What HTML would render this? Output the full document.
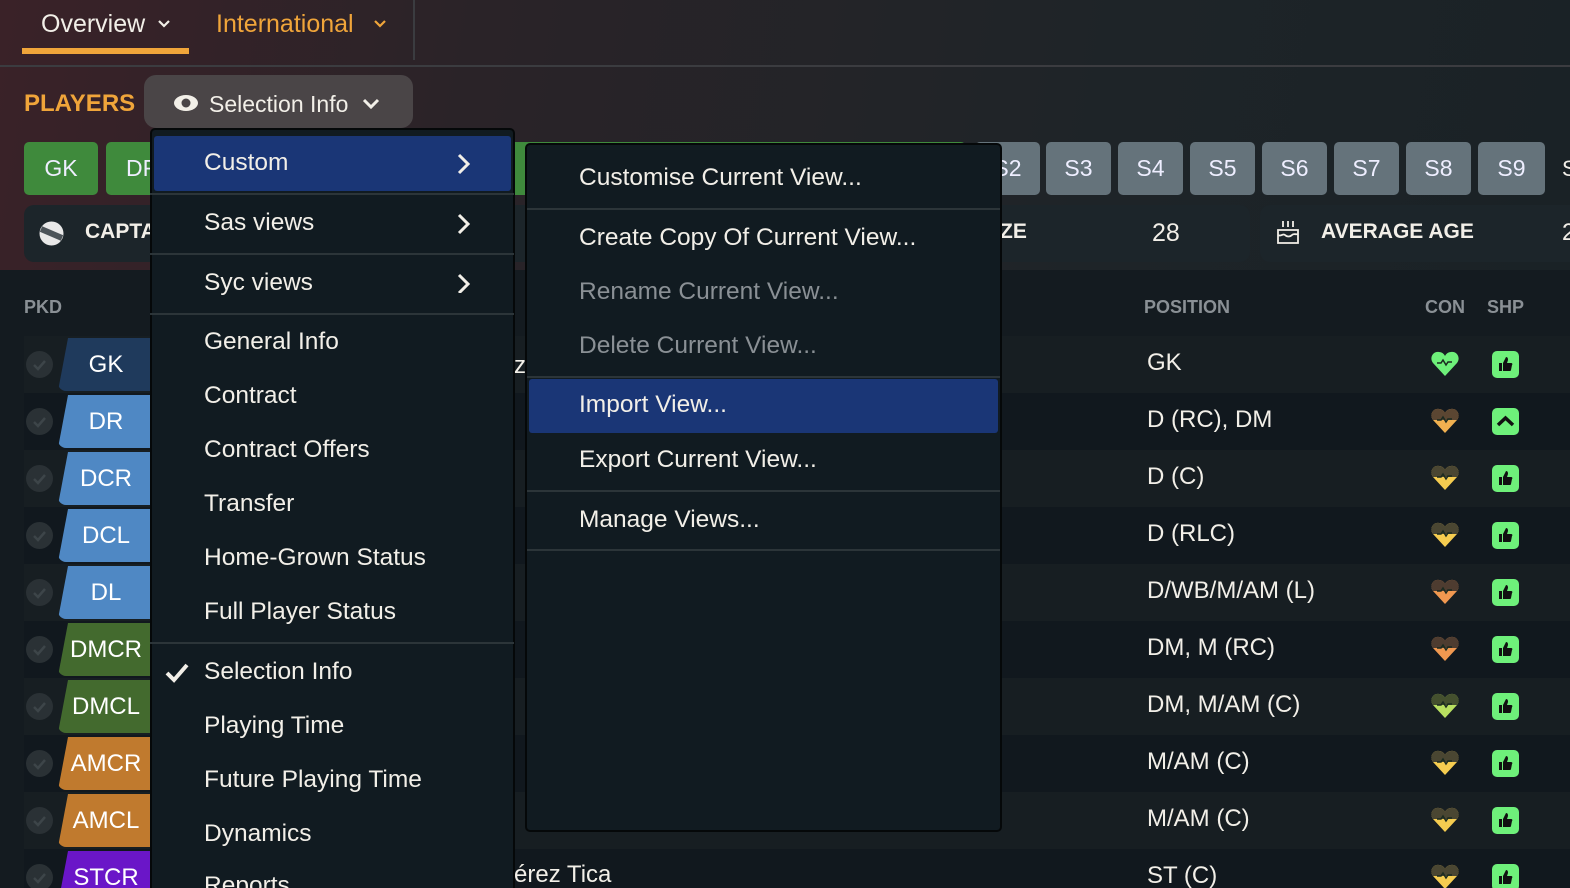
<!DOCTYPE html>
<html><head><meta charset="utf-8"><style>
*{box-sizing:border-box;margin:0;padding:0}
html,body{width:1570px;height:888px;overflow:hidden}
body{position:relative;font-family:"Liberation Sans",sans-serif;background:#141b20;color:#f2efe8}
.abs{position:absolute}
.top{left:0;top:0;width:1570px;height:270px;background:linear-gradient(100deg,#3a2228 0%,#2a2328 30%,#1e2428 70%,#1a2226 100%)}
.nav{left:0;top:0;width:1570px;height:67px;border-bottom:2px solid #3b3c40}
.t{position:absolute;white-space:nowrap}
.tab{position:absolute;top:142px;height:53px;border-radius:5px;font-size:23px;text-align:center;line-height:53px;color:#eef}
.g{background:#3f8a3c}
.s{background:#65737b;width:65px}
.row{position:absolute;left:24px;width:1546px;height:57px}
.chk{position:absolute;left:2px;top:15px;width:27px;height:27px;border-radius:50%;background:#2a3135}
.pos{position:absolute;left:34px;top:2px;width:130px;height:53px;clip-path:polygon(10px 0,100% 0,100% 100%,0 100%);border-radius:8px;font-size:24px;color:#fff;line-height:53px}
.pos span{position:absolute;left:0;width:96px;text-align:center}
.ptxt{position:absolute;left:1123px;top:13px;font-size:24px}
.menu{background:#111b21;border:2px solid #050809;border-radius:5px}
.mi{position:absolute;font-size:24.5px;color:#f2efe8;white-space:nowrap}
.sep{position:absolute;height:2px;background:#2c3539}
.dim{color:#8a9095}
</style></head><body>
<div class="abs top"></div>
<div class="abs nav"></div>
<div class="t" style="left:41px;top:10px;font-size:25px;color:#f2efe8">Overview</div>
<svg class="abs" style="left:157px;top:18px" width="14" height="12"><path d="M2 3l5 5 5-5" stroke="#f2efe8" stroke-width="2.2" fill="none"/></svg>
<div class="abs" style="left:22px;top:48px;width:167px;height:6px;background:#f0a53a"></div>
<div class="t" style="left:216px;top:10px;font-size:25px;color:#f0a53a">International</div>
<svg class="abs" style="left:373px;top:18px" width="14" height="12"><path d="M2 3l5 5 5-5" stroke="#f0a53a" stroke-width="2.2" fill="none"/></svg>
<div class="abs" style="left:413px;top:0;width:2px;height:60px;background:#3b3c40"></div>
<div class="t" style="left:24px;top:90px;font-size:24px;font-weight:bold;color:#f0a53a">PLAYERS</div>
<div class="abs" style="left:144px;top:75px;width:269px;height:53px;border-radius:12px;background:#4a4547"></div>
<svg class="abs" style="left:173px;top:94px" width="26" height="18" viewBox="0 0 26 18"><ellipse cx="13" cy="9" rx="12" ry="8" fill="#f2efe8"/><circle cx="13" cy="9" r="4.5" fill="#4a4547"/></svg>
<div class="t" style="left:209px;top:91px;font-size:23px">Selection Info</div>
<svg class="abs" style="left:361px;top:97px" width="20" height="14"><path d="M3 3l7 7 7-7" stroke="#f2efe8" stroke-width="3" fill="none"/></svg>

<div class="tab g" style="left:24px;width:74px">GK</div>
<div class="tab g" style="left:106px;width:860px;text-align:left;padding-left:20px">DR</div>
<div class="tab s" style="left:975px">S2</div>
<div class="tab s" style="left:1046px">S3</div>
<div class="tab s" style="left:1118px">S4</div>
<div class="tab s" style="left:1190px">S5</div>
<div class="tab s" style="left:1262px">S6</div>
<div class="tab s" style="left:1334px">S7</div>
<div class="tab s" style="left:1406px">S8</div>
<div class="tab s" style="left:1478px;width:67px">S9</div>
<div class="t" style="left:1562px;top:156px;font-size:22px">S</div>

<div class="abs" style="left:24px;top:205px;width:1226px;height:57px;border-radius:10px;background:#1c252a"></div>
<div class="abs" style="left:1260px;top:205px;width:310px;height:57px;border-radius:10px 0 0 10px;background:#1c252a"></div>
<svg class="abs" style="left:38px;top:220px" width="27" height="27" viewBox="0 0 27 27"><circle cx="13.5" cy="13.5" r="12" fill="#e8e8e8"/><path d="M3 9L24 18" stroke="#4b5358" stroke-width="6"/></svg>
<div class="t" style="left:85px;top:220px;font-size:21px;font-weight:bold">CAPTAIN</div>
<div class="t" style="left:1000px;top:220px;font-size:21px;font-weight:bold">ZE</div>
<div class="t" style="left:1152px;top:219px;font-size:25px">28</div>
<svg class="abs" style="left:1275px;top:218px" width="26" height="28" viewBox="0 0 26 28"><path d="M8 3v6M13 3v6M18 3v6M3 12h20v13H3zM3 17c3 2 5-2 7 0s5 2 7 0 4 0 6-1" stroke="#f2efe8" stroke-width="1.8" fill="none"/></svg>
<div class="t" style="left:1321px;top:220px;font-size:21px;font-weight:bold">AVERAGE AGE</div>
<div class="t" style="left:1562px;top:219px;font-size:24px">2</div>

<div class="t dim" style="left:24px;top:297px;font-size:18px;font-weight:bold">PKD</div>
<div class="t dim" style="left:1144px;top:297px;font-size:18px;font-weight:bold">POSITION</div>
<div class="t dim" style="left:1425px;top:297px;font-size:18px;font-weight:bold">CON</div>
<div class="t dim" style="left:1487px;top:297px;font-size:18px;font-weight:bold">SHP</div>

<div id="rows"></div>
<script>
var d=[["GK","#1f3a5c","GK","#6ef07a","#6ef07a",1],["DR","#4f88c4","D (RC), DM","#f0b050","#5b4632",0],["DCR","#4f88c4","D (C)","#f5cc50","#4a4632",1],["DCL","#4f88c4","D (RLC)","#f5cc50","#4a4632",1],["DL","#4f88c4","D/WB/M/AM (L)","#f09850","#4e3c30",1],["DMCR","#436a2e","DM, M (RC)","#f09850","#4e3c30",1],["DMCL","#436a2e","DM, M/AM (C)","#b8e060","#44502e",1],["AMCR","#c07a2e","M/AM (C)","#f5cc50","#4a4632",1],["AMCL","#c07a2e","M/AM (C)","#f5cc50","#4a4632",1],["STCR","#6a16c8","ST (C)","#f5cc50","#4a4632",1]];
var h="";
d.forEach(function(r,i){var y=336+i*57;var bg=i%2?"#11181e":"#171e22";
var fill=r[3],top=r[4];
h+='<div class="row" style="top:'+y+'px;background:'+bg+'"><div class="chk"><svg width="27" height="27"><path d="M8 14l4 4 7-8" stroke="#3d4549" stroke-width="2.5" fill="none"/></svg></div><div class="pos" style="background:'+r[1]+'"><span>'+r[0]+'</span></div><div class="ptxt">'+r[2]+'</div>'+
'<svg style="position:absolute;left:1406px;top:13px" width="30" height="30" viewBox="0 0 30 30"><defs><clipPath id="c'+i+'"><path d="M15 27L3 14C-1 9 3 2 9 3c3 0 5 2 6 4 1-2 3-4 6-4 6-1 10 6 6 11z"/></clipPath></defs><g clip-path="url(#c'+i+')"><rect width="30" height="30" fill="'+fill+'"/><rect width="30" height="'+(i==0?0:14)+'" fill="'+top+'"/></g><path d="M7 14h4l2-3 3 5 2-3h4" stroke="#1a2a20" stroke-width="1.5" fill="none"/></svg>'+
'<div style="position:absolute;left:1468px;top:15px;width:27px;height:27px;border-radius:5px;background:#6ef07a"><svg width="27" height="27" viewBox="0 0 27 27">'+(r[5]?'<path d="M7 12h3v8H7zM11 12l3-6c2 0 2 2 2 3l-1 3h4c1 0 2 1 1 2l-1 5c0 1-1 1-2 1h-6z" fill="#111"/>':'<path d="M6 17l7.5-7 7.5 7" stroke="#111" stroke-width="3.5" fill="none"/>')+'</svg></div></div>';});
document.getElementById("rows").innerHTML=h;
</script>

<div class="abs menu" style="left:150px;top:128px;width:365px;height:770px"></div>
<div class="abs" style="left:154px;top:136px;width:357px;height:55px;background:#1a3676;border-radius:3px"></div>
<div class="mi" style="left:204px;top:149px">Custom</div>
<div class="mi" style="left:204px;top:209px">Sas views</div>
<div class="mi" style="left:204px;top:269px">Syc views</div>
<svg class="abs" style="left:456px;top:153px" width="16" height="140"><path d="M3 2l9 9-9 9M3 62l9 9-9 9M3 122l9 9-9 9" stroke="#f2efe8" stroke-width="3" fill="none"/></svg>
<div class="sep" style="left:150px;top:193px;width:364px"></div>
<div class="sep" style="left:150px;top:253px;width:364px"></div>
<div class="sep" style="left:150px;top:313px;width:364px"></div>
<div class="mi" style="left:204px;top:328px">General Info</div>
<div class="mi" style="left:204px;top:382px">Contract</div>
<div class="mi" style="left:204px;top:436px">Contract Offers</div>
<div class="mi" style="left:204px;top:490px">Transfer</div>
<div class="mi" style="left:204px;top:544px">Home-Grown Status</div>
<div class="mi" style="left:204px;top:598px">Full Player Status</div>
<div class="sep" style="left:150px;top:642px;width:364px"></div>
<svg class="abs" style="left:164px;top:661px" width="26" height="24"><path d="M3 12l7 7L23 4" stroke="#f2efe8" stroke-width="4" fill="none"/></svg>
<div class="mi" style="left:204px;top:658px">Selection Info</div>
<div class="mi" style="left:204px;top:712px">Playing Time</div>
<div class="mi" style="left:204px;top:766px">Future Playing Time</div>
<div class="mi" style="left:204px;top:820px">Dynamics</div>
<div class="mi" style="left:204px;top:872px">Reports</div>

<div class="t" style="left:514px;top:352px;font-size:24px">z</div>
<div class="t" style="left:514px;top:861px;font-size:24px">érez Tica</div>

<div class="abs menu" style="left:525px;top:143px;width:477px;height:689px"></div>
<div class="mi" style="left:579px;top:164px">Customise Current View...</div>
<div class="sep" style="left:527px;top:208px;width:473px"></div>
<div class="mi" style="left:579px;top:224px">Create Copy Of Current View...</div>
<div class="mi dim" style="left:579px;top:278px">Rename Current View...</div>
<div class="mi dim" style="left:579px;top:332px">Delete Current View...</div>
<div class="sep" style="left:527px;top:376px;width:473px"></div>
<div class="abs" style="left:529px;top:379px;width:469px;height:54px;background:#1a3676;border-radius:3px"></div>
<div class="mi" style="left:579px;top:391px">Import View...</div>
<div class="mi" style="left:579px;top:446px">Export Current View...</div>
<div class="sep" style="left:527px;top:490px;width:473px"></div>
<div class="mi" style="left:579px;top:506px">Manage Views...</div>
<div class="sep" style="left:527px;top:549px;width:473px"></div>
</body></html>
